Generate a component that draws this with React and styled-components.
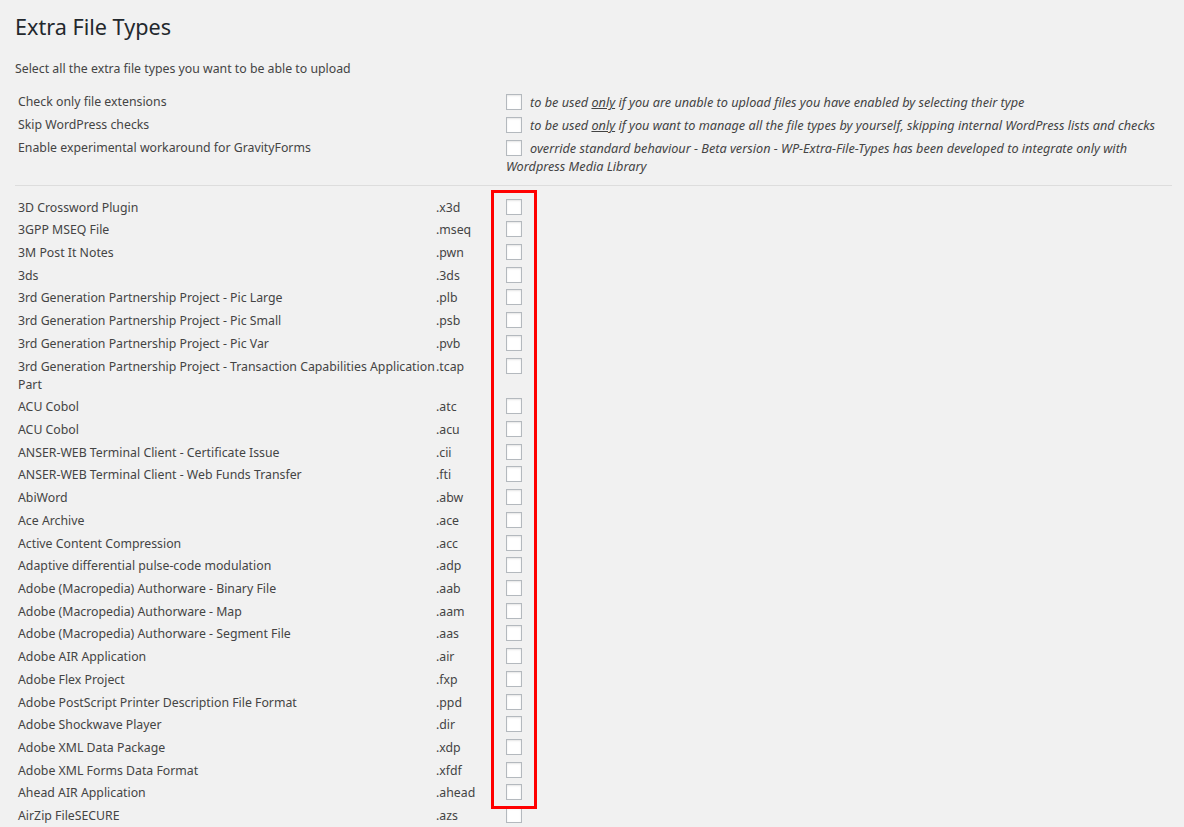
import React from "react";
import styled, { createGlobalStyle } from "styled-components";

const Global = createGlobalStyle`
  html, body {
    margin: 0;
    background: #f1f1f1;
  }
  body {
    font-family: "Noto Sans", "Open Sans", sans-serif;
    font-size: 12.3px;
    color: #444;
  }
`;

const Wrap = styled.div`
  padding: 12px 12px 0 15px;
`;

const Title = styled.h1`
  margin: 0;
  font-size: 21.6px;
  font-weight: 400;
  line-height: 30px;
  color: #23282d;
`;

const Intro = styled.p`
  margin: 18px 0 0;
  line-height: 18px;
`;

const Table = styled.div`
  display: grid;
  grid-template-columns: ${(p) => p.$cols};
  padding-left: 3px;
  margin-top: ${(p) => p.$top || 0}px;
`;

const Cell = styled.div`
  padding: 2.36px 0;
  line-height: 18px;
  min-width: 0;
`;

const DescCell = styled(Cell)`
  font-size: 12.7px;
  font-style: italic;
  u {
    text-decoration: underline;
  }
`;

const Box = styled.span`
  display: inline-block;
  box-sizing: border-box;
  width: 16px;
  height: 16px;
  background: #fff;
  border: 1px solid #b4b9be;
  box-shadow: inset 0 1px 2px rgba(0, 0, 0, 0.1);
  vertical-align: -3px;
  margin-right: 8px;
`;

const Rule = styled.hr`
  border: none;
  border-top: 1px solid #ddd;
  margin: 8px 0 0;
`;

const List = styled.div`
  position: relative;
`;

const Highlight = styled.div`
  position: absolute;
  left: 476px;
  top: -6px;
  width: 40px;
  height: 613px;
  border: 3px solid #ff0000;
  pointer-events: none;
`;

const options = [
  {
    label: "Check only file extensions",
    desc: (
      <>
        to be used <u>only</u> if you are unable to upload files you have enabled by selecting their type
      </>
    ),
  },
  {
    label: "Skip WordPress checks",
    desc: (
      <>
        to be used <u>only</u> if you want to manage all the file types by yourself, skipping internal WordPress lists and checks
      </>
    ),
  },
  {
    label: "Enable experimental workaround for GravityForms",
    desc: (
      <>
        override standard behaviour - Beta version - WP-Extra-File-Types has been developed to integrate only with Wordpress Media Library
      </>
    ),
  },
];

const types = [
  ["3D Crossword Plugin", ".x3d"],
  ["3GPP MSEQ File", ".mseq"],
  ["3M Post It Notes", ".pwn"],
  ["3ds", ".3ds"],
  ["3rd Generation Partnership Project - Pic Large", ".plb"],
  ["3rd Generation Partnership Project - Pic Small", ".psb"],
  ["3rd Generation Partnership Project - Pic Var", ".pvb"],
  ["3rd Generation Partnership Project - Transaction Capabilities Application Part", ".tcap"],
  ["ACU Cobol", ".atc"],
  ["ACU Cobol", ".acu"],
  ["ANSER-WEB Terminal Client - Certificate Issue", ".cii"],
  ["ANSER-WEB Terminal Client - Web Funds Transfer", ".fti"],
  ["AbiWord", ".abw"],
  ["Ace Archive", ".ace"],
  ["Active Content Compression", ".acc"],
  ["Adaptive differential pulse-code modulation", ".adp"],
  ["Adobe (Macropedia) Authorware - Binary File", ".aab"],
  ["Adobe (Macropedia) Authorware - Map", ".aam"],
  ["Adobe (Macropedia) Authorware - Segment File", ".aas"],
  ["Adobe AIR Application", ".air"],
  ["Adobe Flex Project", ".fxp"],
  ["Adobe PostScript Printer Description File Format", ".ppd"],
  ["Adobe Shockwave Player", ".dir"],
  ["Adobe XML Data Package", ".xdp"],
  ["Adobe XML Forms Data Format", ".xfdf"],
  ["Ahead AIR Application", ".ahead"],
  ["AirZip FileSECURE", ".azs"],
  ["Amazon Kindle eBook format", ".azw"],
];

export default function App() {
  return (
    <>
      <Global />
      <Wrap>
        <Title>Extra File Types</Title>
        <Intro>Select all the extra file types you want to be able to upload</Intro>
        <Table $cols="488px 1fr" $top={13}>
          {options.map((o) => (
            <React.Fragment key={o.label}>
              <Cell>{o.label}</Cell>
              <DescCell>
                <Box />
                {o.desc}
              </DescCell>
            </React.Fragment>
          ))}
        </Table>
        <Rule />
        <List>
          <Table $cols="418px 70px 1fr" $top={10}>
            {types.map(([name, ext]) => (
              <React.Fragment key={ext}>
                <Cell>{name}</Cell>
                <Cell>{ext}</Cell>
                <Cell>
                  <Box />
                </Cell>
              </React.Fragment>
            ))}
          </Table>
          <Highlight />
        </List>
      </Wrap>
    </>
  );
}
